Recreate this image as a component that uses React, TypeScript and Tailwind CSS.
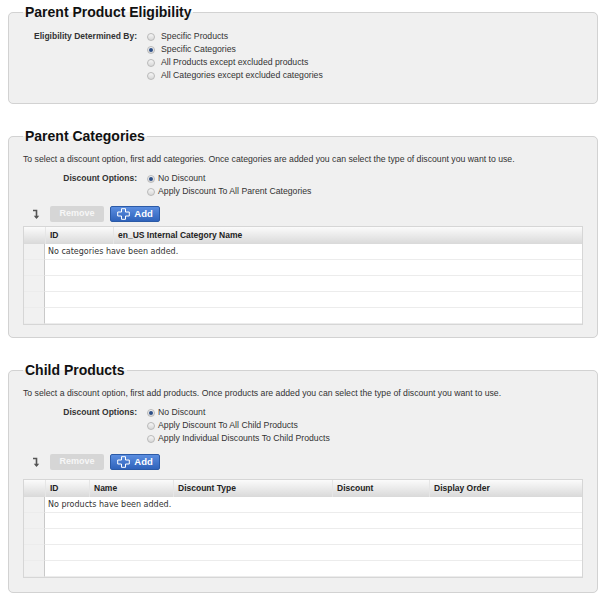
import React from "react";

type RadioOpt = { label: string; checked?: boolean };

const Radio = ({ checked }: { checked?: boolean }) => (
  <span className="w-[8px] h-[8px] rounded-full border border-[#b9b9b9] bg-gradient-to-b from-[#f6f6f6] to-[#d8d8d8] flex items-center justify-center shrink-0">
    {checked && <span className="w-[4px] h-[4px] rounded-full bg-[#2d4f86]" />}
  </span>
);

const RadioGroup = ({ label, options, textGap }: { label: string; options: RadioOpt[]; textGap: string }) => (
  <div className="flex">
    <div className="w-[114px] text-right font-bold text-[8.5px] leading-[13px] text-[#333]">{label}</div>
    <div className="flex flex-col pl-[10px]">
      {options.map((o) => (
        <div key={o.label} className={`flex items-center h-[13px] ${textGap}`}>
          <Radio checked={o.checked} />
          <span className="text-[8.7px] text-[#333] leading-[13px]">{o.label}</span>
        </div>
      ))}
    </div>
  </div>
);

const SortIcon = () => (
  <svg width="8" height="11" viewBox="0 0 8 11" className="shrink-0">
    <path d="M1 1.5 H4.5 V9" stroke="#555" strokeWidth="1.6" fill="none" />
    <path d="M1.8 6.8 L4.5 10 L7.2 6.8 Z" fill="#555" />
  </svg>
);

const PlusIcon = () => (
  <svg width="13" height="12" viewBox="0 0 13 12">
    <path d="M4.5 0.7 H8.5 V4 H12.3 V8 H8.5 V11.3 H4.5 V8 H0.7 V4 H4.5 Z" stroke="#fff" strokeWidth="1" fill="none" />
  </svg>
);

const Toolbar = () => (
  <div className="flex items-center h-[16px]">
    <div className="w-[27px] pl-[9px] flex items-center">
      <SortIcon />
    </div>
    <button className="w-[54px] h-[16px] rounded-[2px] bg-[#d6d6d6] text-[#f7f7f7] font-bold text-[9px] flex items-center justify-center">
      Remove
    </button>
    <button className="ml-[6px] w-[50px] h-[16px] rounded-[2px] border border-[#2b5aa6] bg-gradient-to-b from-[#5a8de0] to-[#2f63bb] text-white font-bold text-[9.5px] flex items-center justify-center gap-[4px]">
      <PlusIcon />
      <span>Add</span>
    </button>
  </div>
);

type Col = { label: string; w: string };

const Grid = ({ cols, empty }: { cols: Col[]; empty: string }) => (
  <div className="border border-[#d6d6d6] bg-white">
    <div className="flex h-[17px] bg-gradient-to-b from-[#fbfbfb] to-[#d9d9d9]">
      <div className="w-[21px] shrink-0" />
      {cols.map((c) => (
        <div key={c.label} className={`${c.w} border-l border-[#e6e6e6] pl-[4px] flex items-center font-bold text-[8.5px] text-[#222]`}>
          {c.label}
        </div>
      ))}
    </div>
    {[0, 1, 2, 3, 4].map((i) => (
      <div key={i} className="flex h-[16px]">
        <div className="w-[21px] shrink-0 bg-[#f1f1f1] border-r border-[#c9c9c9] border-b border-b-[#ececec]" />
        <div className="flex-1 border-b border-[#ececec] pl-[3px] flex items-center text-[8px] text-[#333] font-['DejaVu_Sans',Verdana,sans-serif]">
          {i === 0 ? empty : ""}
        </div>
      </div>
    ))}
  </div>
);

const Section = ({ title, children, className }: { title: string; children: React.ReactNode; className?: string }) => (
  <fieldset className={`w-[590px] ml-[8px] border border-[#d2d2d2] rounded-[5px] bg-[#f0f0f0] px-[14px] ${className ?? ""}`}>
    <legend className="px-[2px] text-[14px] leading-[17px] font-bold text-[#111]">{title}</legend>
    {children}
  </fieldset>
);

export default function App() {
  return (
    <div className="w-[608px] h-[605px] bg-white pt-[4px] font-['Liberation_Sans',Arial,sans-serif] overflow-hidden">
      <Section title="Parent Product Eligibility" className="pt-[9px] pb-[21px]">
        <RadioGroup
          label="Eligibility Determined By:"
          textGap="gap-[6px]"
          options={[
            { label: "Specific Products" },
            { label: "Specific Categories", checked: true },
            { label: "All Products except excluded products" },
            { label: "All Categories except excluded categories" },
          ]}
        />
      </Section>

      <Section title="Parent Categories" className="mt-[24px] pt-[8px] pb-[12px]">
        <p className="text-[8.7px] leading-[13px] text-[#333]">
          To select a discount option, first add categories. Once categories are added you can select the type of discount you want to use.
        </p>
        <div className="mt-[6px]">
          <RadioGroup
            label="Discount Options:"
            textGap="gap-[3px]"
            options={[{ label: "No Discount", checked: true }, { label: "Apply Discount To All Parent Categories" }]}
          />
        </div>
        <div className="mt-[8px]">
          <Toolbar />
        </div>
        <div className="mt-[4px]">
          <Grid cols={[{ label: "ID", w: "w-[68px]" }, { label: "en_US Internal Category Name", w: "flex-1" }]} empty="No categories have been added." />
        </div>
      </Section>

      <Section title="Child Products" className="mt-[24px] pt-[8px] pb-[14px]">
        <p className="text-[8.7px] leading-[13px] text-[#333]">
          To select a discount option, first add products. Once products are added you can select the type of discount you want to use.
        </p>
        <div className="mt-[6px]">
          <RadioGroup
            label="Discount Options:"
            textGap="gap-[3px]"
            options={[
              { label: "No Discount", checked: true },
              { label: "Apply Discount To All Child Products" },
              { label: "Apply Individual Discounts To Child Products" },
            ]}
          />
        </div>
        <div className="mt-[9px]">
          <Toolbar />
        </div>
        <div className="mt-[9px]">
          <Grid
            cols={[
              { label: "ID", w: "w-[44px]" },
              { label: "Name", w: "w-[84px]" },
              { label: "Discount Type", w: "w-[159px]" },
              { label: "Discount", w: "w-[97px]" },
              { label: "Display Order", w: "flex-1" },
            ]}
            empty="No products have been added."
          />
        </div>
      </Section>
    </div>
  );
}
